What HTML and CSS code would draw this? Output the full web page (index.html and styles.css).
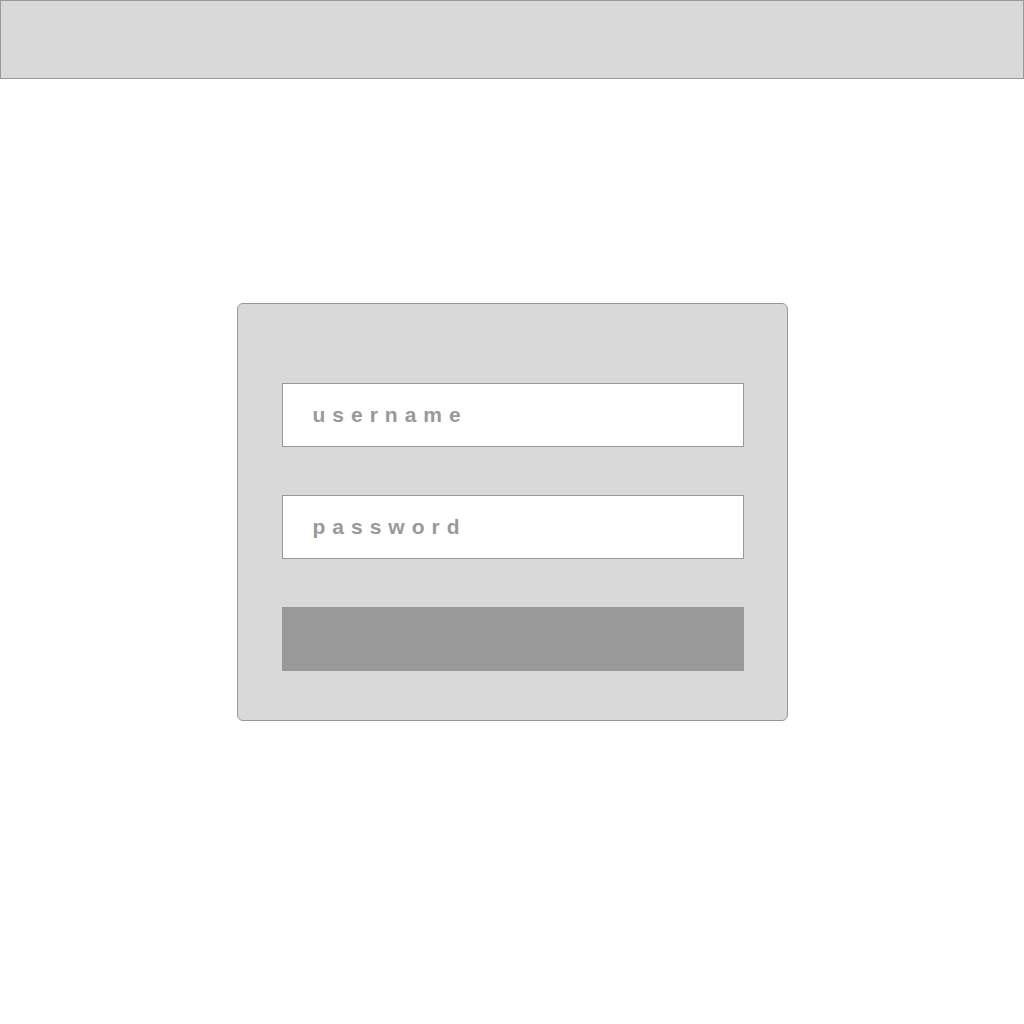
FILE: index.html
```html
<!DOCTYPE html>
<html lang="en">
<head>
  <meta charset="UTF-8">
  <title>Login</title>
  <link rel="stylesheet" href="styles.css">
</head>
<body>

  <header class="top-bar"></header>

  <div class="login-box">
    <input class="field" type="text" placeholder="username">
    <input class="field" type="password" placeholder="password">
    <button class="submit" type="button"></button>
  </div>

</body>
</html>
```

FILE: styles.css
```css
body {
  margin: 0;
  background-color: white;
  font-family: "Liberation Sans", Arial, sans-serif;
}
.top-bar {
  height: 77px;
  background-color: #d9d9d9;
  border: 1px solid #999;
}
.login-box {
  width: 462px;
  margin: 224px auto 0;
  padding: 79px 43px 49px 44px;
  background-color: #d9d9d9;
  border: 1px solid #999;
  border-radius: 6px;
  display: flex;
  flex-direction: column;
  gap: 48px;
}
.field {
  box-sizing: border-box;
  height: 64px;
  width: 100%;
  margin: 0;
  padding: 0 30px;
  background-color: white;
  border: 1px solid #999;
  border-radius: 0;
  font-family: inherit;
  font-size: 21px;
  font-weight: bold;
  letter-spacing: 7px;
  color: #999;
  outline: none;
}
.field::placeholder {
  color: #999;
  opacity: 1;
}
.submit {
  height: 64px;
  width: 100%;
  margin: 0;
  background-color: #999;
  border: none;
  border-radius: 0;
}
```
